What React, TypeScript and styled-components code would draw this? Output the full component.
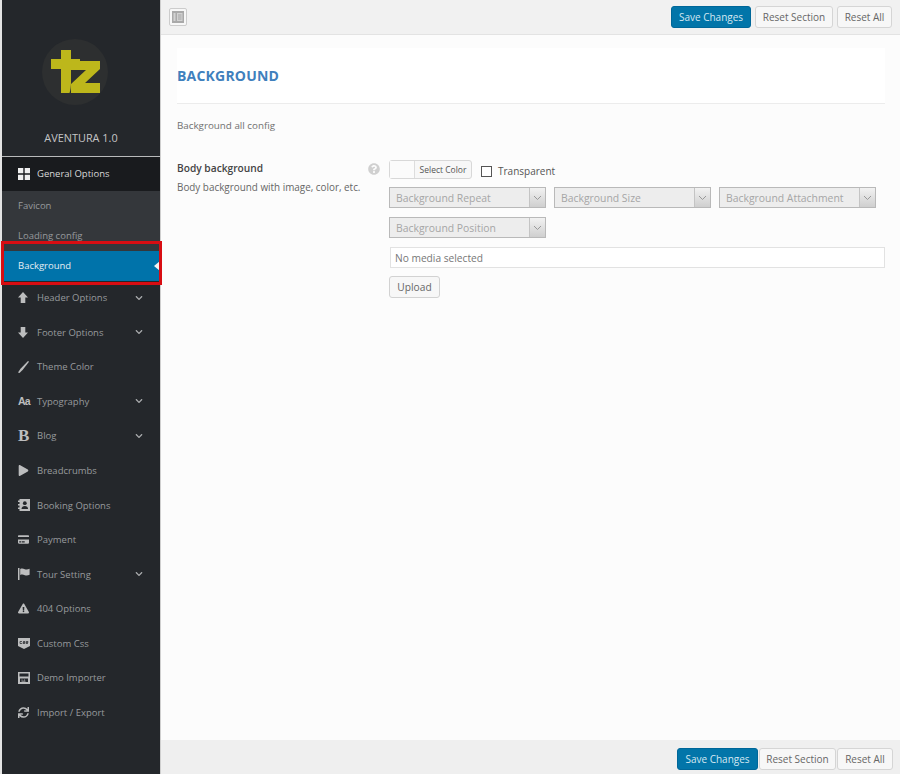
import React from "react";
import styled, { createGlobalStyle } from "styled-components";
import {
  FaChevronDown,
  FaCreditCard,
  FaExclamationTriangle,
  FaPlay,
  FaQuestionCircle,
  FaSync,
} from "react-icons/fa";

const GlobalStyle = createGlobalStyle`
  html, body {
    margin: 0;
    padding: 0;
    background: #fff;
  }
  body {
    font-family: "Open Sans", "Liberation Sans", sans-serif;
    font-size: 10.5px;
    color: #555;
  }
`;

const Page = styled.div`
  display: flex;
  width: 900px;
  height: 774px;
  overflow: hidden;
  background: #e4e4e4;
  padding-left: 2px;
  box-sizing: border-box;
`;

const Sidebar = styled.aside`
  position: relative;
  width: 158px;
  flex: none;
  background: #24272b;
`;

const Brand = styled.div`
  height: 157px;
  box-sizing: border-box;
  padding-top: 38px;
  display: flex;
  flex-direction: column;
  align-items: center;
  border-bottom: 1px solid #b9babb;
`;

const LogoMark = styled.div`
  height: 68px;
  margin-right: 12px;
`;

const BrandName = styled.div`
  margin-top: 24px;
  font-size: 10.9px;
  line-height: 15px;
  color: #c4c5c6;
`;

const ActiveGroup = styled.div`
  height: 34px;
  box-sizing: border-box;
  padding: 0 0 1px 16px;
  display: flex;
  align-items: center;
  font-size: 9.5px;
  background: #191b1e;
  color: #d8d8d8;
`;

const SubMenu = styled.div`
  background: #34373b;
`;

const SubItem = styled.div<{ $active?: boolean }>`
  position: relative;
  height: 30px;
  box-sizing: border-box;
  padding: 0 0 1px 16px;
  display: flex;
  align-items: center;
  font-size: 9.5px;
  color: ${({ $active }) => ($active ? "#e6eef3" : "#96999c")};
  background: ${({ $active }) => ($active ? "#0073aa" : "transparent")};
`;

const ActiveArrow = styled.span`
  position: absolute;
  right: 0;
  top: 10px;
  border-style: solid;
  border-width: 5px 6px 5px 0;
  border-color: transparent #f3f3f3 transparent transparent;
`;

const Highlight = styled.div`
  position: absolute;
  left: -1px;
  top: 241px;
  width: 161px;
  height: 44px;
  box-sizing: border-box;
  border: 3px solid #d80d12;
  pointer-events: none;
`;

const NavItem = styled.div`
  height: 34.55px;
  box-sizing: border-box;
  padding: 0 0 1px 16px;
  display: flex;
  align-items: center;
  font-size: 9.5px;
  color: #979a9d;
`;

const NavIcon = styled.span`
  width: 19px;
  flex: none;
  display: flex;
  align-items: center;
  color: #bcbdbe;
  font-size: 11px;
`;

const NavLabel = styled.span`
  flex: 1;
  white-space: nowrap;
`;

const NavChevron = styled.span`
  display: flex;
  margin-right: 17px;
  font-size: 8px;
  color: #a9abad;
`;

const TextGlyph = styled.span<{ $serif?: boolean }>`
  font-family: ${({ $serif }) =>
    $serif ? '"Liberation Serif", serif' : '"Liberation Sans", sans-serif'};
  font-weight: 700;
  font-size: ${({ $serif }) => ($serif ? "17px" : "10.5px")};
  letter-spacing: ${({ $serif }) => ($serif ? "0" : "-0.9px")};
  line-height: 1;
`;

const Main = styled.main`
  flex: 1;
  min-width: 0;
  display: flex;
  flex-direction: column;
  background: #fcfcfc;
  border-left: 1px solid #cfcfcf;
`;

const TopBar = styled.div`
  height: 35px;
  flex: none;
  box-sizing: border-box;
  display: flex;
  align-items: center;
  padding: 0 8px;
  background: #f1f1f1;
  border-bottom: 1px solid #e3e3e3;
`;

const ExpandButton = styled.div`
  width: 18px;
  height: 18px;
  box-sizing: border-box;
  display: flex;
  align-items: center;
  justify-content: center;
  background: #f7f7f7;
  border: 1px solid #cccccc;
  border-radius: 2px;
`;

const ButtonGroup = styled.div<{ $joined?: boolean }>`
  margin-left: auto;
  display: flex;
  gap: ${({ $joined }) => ($joined ? "1px" : "4px")};
`;

const Button = styled.button<{ $primary?: boolean; $width: number }>`
  width: ${({ $width }) => $width}px;
  height: 22px;
  padding: 0;
  font-family: inherit;
  font-size: 10px;
  color: ${({ $primary }) => ($primary ? "#d5e8f2" : "#666")};
  background: ${({ $primary }) => ($primary ? "#0275a9" : "#f7f7f7")};
  border: 1px solid ${({ $primary }) => ($primary ? "#006799" : "#d5d5d5")};
  border-radius: 3px;
`;

const Content = styled.div`
  flex: 1;
  padding: 13px 15px 0 16px;
`;

const SectionHead = styled.div`
  height: 56px;
  box-sizing: border-box;
  display: flex;
  align-items: center;
  background: #fff;
  border-bottom: 1px solid #ececec;
`;

const SectionTitle = styled.h2`
  margin: 0;
  font-size: 14px;
  font-weight: 700;
  color: #3f80bd;
  letter-spacing: 0.2px;
`;

const SectionDesc = styled.p`
  margin: 15px 0 0;
  font-size: 9.8px;
  line-height: 14px;
  color: #707070;
`;

const FieldRow = styled.div`
  margin-top: 27px;
  display: flex;
`;

const FieldLabel = styled.div`
  width: 191px;
  flex: none;
  padding-top: 1px;
`;

const FieldName = styled.div`
  font-size: 10.2px;
  line-height: 14px;
  font-weight: 600;
  color: #444;
`;

const FieldHint = styled.div`
  margin-top: 5px;
  font-size: 9.9px;
  line-height: 15px;
  color: #666;
`;

const HelpIcon = styled.div`
  width: 21px;
  flex: none;
  padding-top: 3px;
  font-size: 12px;
  line-height: 0;
  color: #d0d0d0;
`;

const FieldBody = styled.div`
  flex: 1;
  min-width: 0;
  display: flex;
  flex-direction: column;
`;

const ColorLine = styled.div`
  display: flex;
  align-items: center;
  height: 19px;
`;

const ColorButton = styled.div`
  width: 83px;
  height: 19px;
  box-sizing: border-box;
  display: flex;
  background: #f7f7f7;
  border: 1px solid #d8d8d8;
  border-radius: 3px;
`;

const ColorSwatch = styled.span`
  width: 24px;
  background: #fbfbfb;
  border-right: 1px solid #dddddd;
`;

const ColorText = styled.span`
  flex: 1;
  text-align: center;
  font-size: 8.5px;
  line-height: 17px;
  color: #555;
`;

const CheckBox = styled.span`
  width: 9px;
  height: 9px;
  margin: 3px 6px 0 9px;
  background: #fff;
  border: 1px solid #555;
`;

const CheckLabel = styled.span`
  margin-top: 3px;
  font-size: 10px;
  color: #555;
`;

const SelectGrid = styled.div`
  margin-top: 8px;
  display: flex;
  flex-wrap: wrap;
  gap: 9px 8px;
`;

const FakeSelect = styled.div`
  width: 157px;
  height: 21px;
  box-sizing: border-box;
  display: flex;
  background: #ededed;
  border: 1px solid #b9b9b9;
`;

const SelectText = styled.span`
  flex: 1;
  padding-left: 6px;
  font-size: 10.4px;
  line-height: 20px;
  color: #a6a6a6;
  white-space: nowrap;
`;

const SelectArrow = styled.span`
  width: 15px;
  display: flex;
  align-items: center;
  justify-content: center;
  background: linear-gradient(#f2f2f2, #cfcfcf);
  border-left: 1px solid #c4c4c4;
`;

const MediaInput = styled.div`
  margin: 9px 0 0 1px;
  height: 21px;
  box-sizing: border-box;
  padding-left: 4px;
  font-size: 10.2px;
  line-height: 20px;
  color: #777;
  background: #fff;
  border: 1px solid #e2e2e2;
`;

const UploadButton = styled.div`
  margin-top: 8px;
  width: 51px;
  height: 22px;
  box-sizing: border-box;
  text-align: center;
  font-size: 10.2px;
  line-height: 20px;
  color: #666;
  background: #f7f7f7;
  border: 1px solid #d2d2d2;
  border-radius: 3px;
`;

const BottomBar = styled.div`
  height: 34px;
  flex: none;
  box-sizing: border-box;
  display: flex;
  align-items: center;
  padding: 3px 7px 0 0;
  background: #efefef;
`;

const Logo = () => (
  <svg width="68" height="68" viewBox="41 38 68 68" aria-hidden="true">
    <circle cx="75" cy="72" r="33" fill="#2d2f30" />
    <path d="M61 50h10v9h9v10H71v13c0 4-.5 8-1.500 11H61V69H51V59h10z" fill="#bdb71b" />
    <path d="M71 61h29v8L85 83h15v10H71v-9l15-14H71z" fill="#bdb71b" />
  </svg>
);

const GridIcon = () => (
  <svg width="12" height="12" viewBox="0 0 12 12" aria-hidden="true">
    <path d="M0 0h5.300v5.300H0zM6.700 0H12v5.300H6.700zM0 6.700h5.300V12H0zM6.700 6.700H12V12H6.700z" fill="#f0f0f0" />
  </svg>
);

const UpArrowIcon = () => (
  <svg width="10" height="11" viewBox="0 0 10 11" aria-hidden="true">
    <path d="M5 0l5 5.500H7.300V11H2.700V5.500H0z" fill="currentColor" />
  </svg>
);

const DownArrowIcon = () => (
  <svg width="10" height="11" viewBox="0 0 10 11" aria-hidden="true">
    <path d="M5 11L0 5.500h2.700V0h4.600v5.500H10z" fill="currentColor" />
  </svg>
);

const BrushIcon = () => (
  <svg width="11" height="12" viewBox="0 0 11 12" aria-hidden="true">
    <path d="M10 0l1 .8-6.200 8L1.500 12 0 11.500l2.500-3.800z" fill="currentColor" />
  </svg>
);

const BookingIcon = () => (
  <svg width="12" height="12" viewBox="0 0 12 12" aria-hidden="true">
    <path d="M1.500 0H12v12H1.500v-2H0V8.500h1.500v-2H0V5h1.500V3H0V1.500h1.500z" fill="currentColor" />
    <circle cx="6.800" cy="4.200" r="1.900" fill="#24272b" />
    <path d="M3.500 10c0-2 1.500-3 3.300-3s3.300 1 3.300 3z" fill="#24272b" />
  </svg>
);

const FlagIcon = () => (
  <svg width="12" height="12" viewBox="0 0 12 12" aria-hidden="true">
    <path d="M0 0h1.500v12H0z" fill="currentColor" />
    <path d="M2.200 1C4 .2 5.200.6 6.800 1.200s3 .4 4.800-.4v6c-1.800.8-3.200 1-4.800.4S4 6.200 2.200 7z" fill="currentColor" />
  </svg>
);

const CssIcon = () => (
  <svg width="12" height="12" viewBox="0 0 12 12" aria-hidden="true">
    <path d="M0 1h12v8l-6 3-6-3z" fill="currentColor" />
    <path d="M2 4.500h2M2 4.500v2h2M5 4.500h2v1H5v1h2M8 4.500h2v1H8v1h2" stroke="#24272b" strokeWidth=".7" fill="none" />
  </svg>
);

const ImporterIcon = () => (
  <svg width="12" height="12" viewBox="0 0 12 12" aria-hidden="true">
    <path fillRule="evenodd" d="M0 0h12v12H0zM1.500 1.500v3h9v-3zM2 6.500V10h8V6.500z" fill="currentColor" />
    <path d="M3.500 8h1M6 8h1M3.500 9.200h4" stroke="currentColor" strokeWidth=".8" />
  </svg>
);

const LayoutIcon = () => (
  <svg width="12" height="12" viewBox="0 0 12 12" aria-hidden="true">
    <rect width="12" height="12" fill="#a9a9a9" />
    <path d="M1.500 2h2v8h-2zM5 2h5.500v8H5z" fill="#d2d2d2" />
    <path d="M6 4h3.500M6 6h3.500M6 8h3.500" stroke="#999" strokeWidth=".8" />
  </svg>
);

const ChevronSmall = () => (
  <svg width="9" height="6" viewBox="0 0 9 6" aria-hidden="true">
    <path d="M1 1l3.500 3.500L8 1" fill="none" stroke="#999" strokeWidth="1" />
  </svg>
);

const navItems: { label: string; icon: React.ReactNode; more?: boolean }[] = [
  { label: "Header Options", icon: <UpArrowIcon />, more: true },
  { label: "Footer Options", icon: <DownArrowIcon />, more: true },
  { label: "Theme Color", icon: <BrushIcon /> },
  { label: "Typography", icon: <TextGlyph>Aa</TextGlyph>, more: true },
  { label: "Blog", icon: <TextGlyph $serif>B</TextGlyph>, more: true },
  { label: "Breadcrumbs", icon: <FaPlay /> },
  { label: "Booking Options", icon: <BookingIcon /> },
  { label: "Payment", icon: <FaCreditCard /> },
  { label: "Tour Setting", icon: <FlagIcon />, more: true },
  { label: "404 Options", icon: <FaExclamationTriangle /> },
  { label: "Custom Css", icon: <CssIcon /> },
  { label: "Demo Importer", icon: <ImporterIcon /> },
  { label: "Import / Export", icon: <FaSync /> },
];

const selects = [
  "Background Repeat",
  "Background Size",
  "Background Attachment",
  "Background Position",
];

export default function App() {
  return (
    <>
      <GlobalStyle />
      <Page>
        <Sidebar>
          <Brand>
            <LogoMark>
              <Logo />
            </LogoMark>
            <BrandName>AVENTURA 1.0</BrandName>
          </Brand>
          <ActiveGroup>
            <NavIcon>
              <GridIcon />
            </NavIcon>
            <NavLabel>General Options</NavLabel>
          </ActiveGroup>
          <SubMenu>
            <SubItem>Favicon</SubItem>
            <SubItem>Loading config</SubItem>
            <SubItem $active>
              Background
              <ActiveArrow />
            </SubItem>
          </SubMenu>
          {navItems.map((item) => (
            <NavItem key={item.label}>
              <NavIcon>{item.icon}</NavIcon>
              <NavLabel>{item.label}</NavLabel>
              {item.more && (
                <NavChevron>
                  <FaChevronDown />
                </NavChevron>
              )}
            </NavItem>
          ))}
          <Highlight />
        </Sidebar>
        <Main>
          <TopBar>
            <ExpandButton>
              <LayoutIcon />
            </ExpandButton>
            <ButtonGroup>
              <Button $primary $width={80}>Save Changes</Button>
              <Button $width={78}>Reset Section</Button>
              <Button $width={55}>Reset All</Button>
            </ButtonGroup>
          </TopBar>
          <Content>
            <SectionHead>
              <SectionTitle>BACKGROUND</SectionTitle>
            </SectionHead>
            <SectionDesc>Background all config</SectionDesc>
            <FieldRow>
              <FieldLabel>
                <FieldName>Body background</FieldName>
                <FieldHint>Body background with image, color, etc.</FieldHint>
              </FieldLabel>
              <HelpIcon>
                <FaQuestionCircle />
              </HelpIcon>
              <FieldBody>
                <ColorLine>
                  <ColorButton>
                    <ColorSwatch />
                    <ColorText>Select Color</ColorText>
                  </ColorButton>
                  <CheckBox />
                  <CheckLabel>Transparent</CheckLabel>
                </ColorLine>
                <SelectGrid>
                  {selects.map((name) => (
                    <FakeSelect key={name}>
                      <SelectText>{name}</SelectText>
                      <SelectArrow>
                        <ChevronSmall />
                      </SelectArrow>
                    </FakeSelect>
                  ))}
                </SelectGrid>
                <MediaInput>No media selected</MediaInput>
                <UploadButton>Upload</UploadButton>
              </FieldBody>
            </FieldRow>
          </Content>
          <BottomBar>
            <ButtonGroup $joined>
              <Button $primary $width={81}>Save Changes</Button>
              <Button $width={77}>Reset Section</Button>
              <Button $width={56}>Reset All</Button>
            </ButtonGroup>
          </BottomBar>
        </Main>
      </Page>
    </>
  );
}
